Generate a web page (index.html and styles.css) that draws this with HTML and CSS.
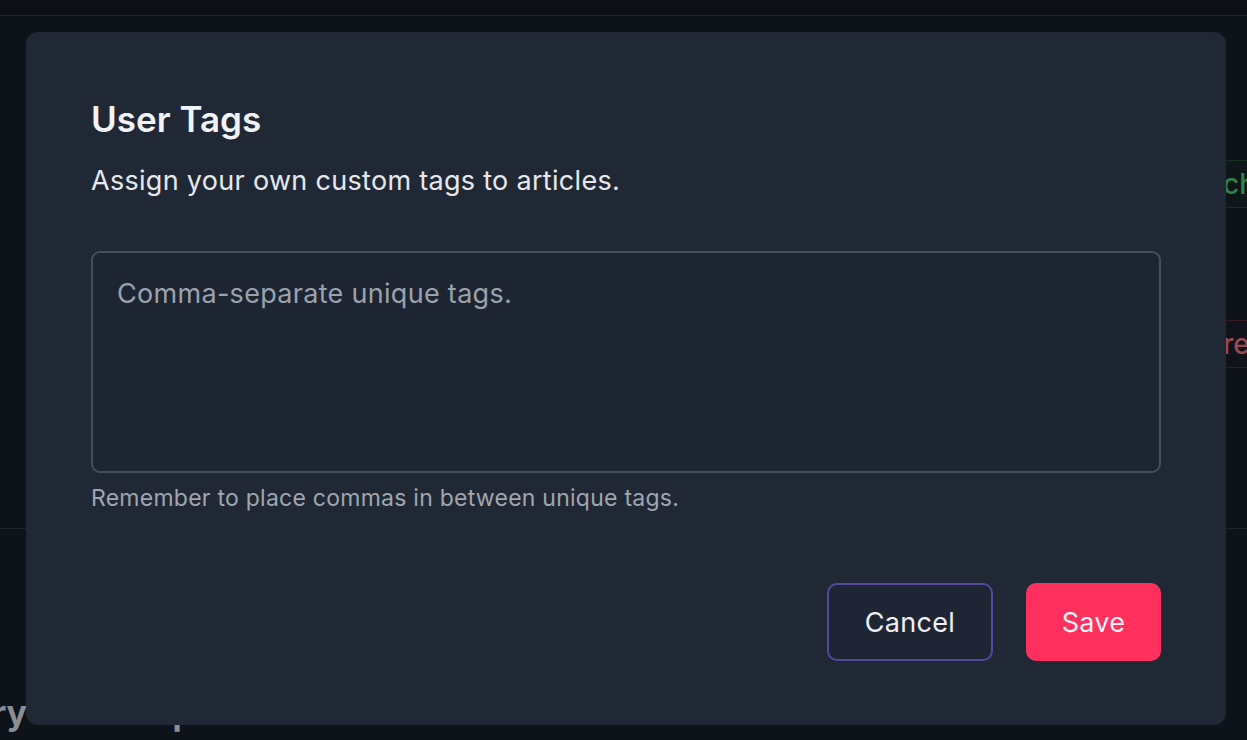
FILE: index.html
```html
<!DOCTYPE html>
<html lang="en">
<head>
<meta charset="utf-8">
<title>User Tags</title>
<link rel="stylesheet" href="styles.css">
</head>
<body>
<div class="page">
  <header class="topbar"></header>
  <section class="list">
    <div class="row row-green"><span class="pill pill-green">check</span></div>
    <div class="row row-red"><span class="pill pill-red">review</span></div>
  </section>
  <div class="divider"></div>
  <h2 class="summary">Summary of the top stories this week</h2>
</div>

<div class="overlay">
  <div class="modal" role="dialog" aria-labelledby="modal-title">
    <h1 class="modal-title" id="modal-title">User Tags</h1>
    <p class="modal-subtitle">Assign your own custom tags to articles.</p>
    <textarea class="tags-input" placeholder="Comma-separate unique tags."></textarea>
    <p class="helper">Remember to place commas in between unique tags.</p>
    <div class="actions">
      <button class="btn btn-cancel">Cancel</button>
      <button class="btn btn-save">Save</button>
    </div>
  </div>
</div>
</body>
</html>
```

FILE: styles.css
```css
* { box-sizing: border-box; }

html, body {
  margin: 0;
  padding: 0;
  width: 1247px;
  height: 740px;
  overflow: hidden;
  background: #0e1219;
  font-family: Inter, "Noto Sans", "Liberation Sans", sans-serif;
}

.page {
  display: flex;
  flex-direction: column;
  height: 740px;
}

.topbar {
  height: 16px;
  border-bottom: 1px solid #1e232c;
  background: #0c1016;
}

.list {
  display: flex;
  flex-direction: column;
  padding-top: 144px;
}

.row {
  display: flex;
  justify-content: flex-end;
}

.row-red { margin-top: 112px; }

.pill {
  display: flex;
  align-items: center;
  height: 48px;
  margin-right: -60px;
  width: 84px;
  padding-left: 0;
  font-size: 28px;
  font-weight: 500;
}

.pill-green {
  color: #2e8446;
  border-top: 1px solid #17301f;
  border-bottom: 1px solid #17301f;
  background: #0f161a;
}

.pill-red {
  color: #9a4756;
  border-top: 1px solid #3a1a24;
  border-bottom: 1px solid #3a1a24;
  background: #12121a;
}

.divider {
  margin-top: 160px;
  height: 1px;
  background: #1f242d;
}

.summary {
  margin: 164px 0 0 -133px;
  font-size: 34px;
  font-weight: 700;
  color: #8a8e96;
  white-space: nowrap;
  line-height: 40px;
}

.overlay {
  position: fixed;
  inset: 0;
  padding: 32px 21px 15px 26px;
}

.modal {
  display: flex;
  flex-direction: column;
  background: #202836;
  border-radius: 12px;
  padding: 66px 65px 64px 65px;
  height: 693px;
}

.modal-title {
  margin: 0;
  font-size: 35px;
  line-height: 43px;
  font-weight: 600;
  color: #f1f3f6;
}

.modal-subtitle {
  margin: 22px 0 0;
  font-size: 27px;
  letter-spacing: 0.3px;
  line-height: 36px;
  color: #e6e8ec;
}

.tags-input {
  margin-top: 52px;
  height: 222px;
  width: 100%;
  resize: none;
  background: #1d2532;
  border: 2px solid #454e5c;
  border-radius: 9px;
  padding: 23px 24px;
  font-family: inherit;
  font-size: 27px;
  letter-spacing: 0.3px;
  line-height: 36px;
  color: #e6e8ec;
  outline: none;
}

.tags-input::placeholder {
  color: #9ca2ad;
}

.helper {
  margin: 10px 0 0;
  font-size: 23px;
  letter-spacing: 0.25px;
  line-height: 30px;
  color: #a0a6b0;
}

.actions {
  display: flex;
  justify-content: flex-end;
  gap: 33px;
  margin-top: auto;
}

.btn {
  height: 78px;
  border-radius: 10px;
  font-family: inherit;
  font-size: 27px;
  letter-spacing: 0.3px;
  font-weight: 400;
  cursor: pointer;
}

.btn-cancel {
  width: 166px;
  background: #1f2534;
  border: 2px solid #54479c;
  color: #eef0f4;
}

.btn-save {
  width: 135px;
  background: #ff2f5e;
  border: none;
  color: #fff1f4;
}
```
